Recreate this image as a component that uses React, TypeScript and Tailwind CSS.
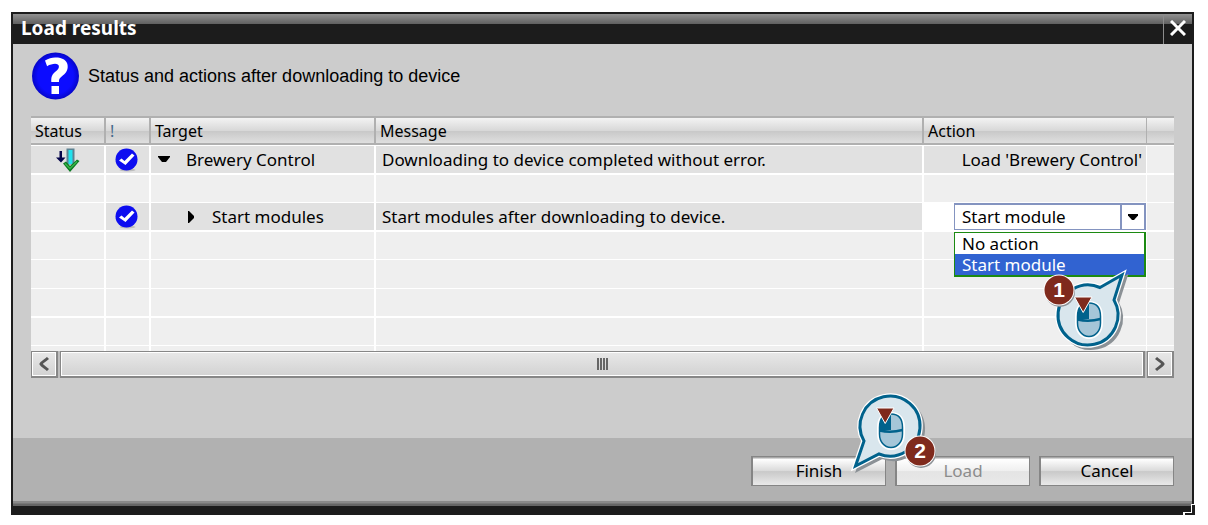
import { useState } from "react";
import type { ReactNode } from "react";

const cell = "border-white px-0 align-middle whitespace-nowrap";
const head =
  "h-[29px] border-y-2 border-[#b0b0b0] bg-[linear-gradient(#f3f3f3,#d8d8d8_50%,#c8c8c8_52%,#dfdfdf)] p-0 pl-1 text-left text-[16px] font-normal";

type Row = {
  height: string;
  line: string;
};

const emptyRows: Row[] = [
  { height: "h-[28px]", line: "border-b" },
  { height: "h-[29px]", line: "border-b" },
  { height: "h-[29px]", line: "border-b-2" },
  { height: "h-[28px]", line: "border-b" },
  { height: "h-[5px]", line: "border-b-0" },
];

function CheckIcon() {
  return (
    <svg width="26" height="24" viewBox="0 0 26 24" className="mx-auto block" aria-label="OK">
      <ellipse cx="12.500" cy="22" rx="8" ry="1.500" fill="#bdbdbd" />
      <circle cx="11.500" cy="11.500" r="11" fill="#0d0df0" />
      <path d="M4 12.500 6.500 10.500 9.500 13 17 5.500 19.500 7.500 10.500 17Z" fill="#fff" />
    </svg>
  );
}

function DownloadIcon() {
  return (
    <svg width="24" height="24" viewBox="0 0 24 24" className="mx-auto block" aria-label="Downloaded">
      <path d="M3.500 3h2.500v6.500h3.500L5 14.500 0 9.500h3.500Z" fill="#05054a" />
      <rect x="10.500" y="0.500" width="8" height="16" fill="#5c8292" />
      <rect x="12.500" y="2" width="4" height="14" fill="#20e2ee" />
      <path d="M7 15.500 10 13.500l4 4.500 7-6.500 2.500 1.500L14 24Z" fill="#0b7a22" />
      <path d="m9 15.500 5 5 7-7" fill="none" stroke="#37b54a" strokeWidth="1.500" />
    </svg>
  );
}

function QuestionIcon() {
  return (
    <svg width="49" height="48" viewBox="0 0 49 48" className="block shrink-0" aria-hidden="true">
      <defs>
        <radialGradient id="ball">
          <stop offset="0.75" stopColor="#0c0cff" />
          <stop offset="1" stopColor="#0606c8" />
        </radialGradient>
      </defs>
      <circle cx="24.500" cy="24" r="23.500" fill="url(#ball)" />
      <path
        d="M14 8.500C18.500 5.500 23 5 27 5.600c6.500.9 10 4.400 9.700 9.400-.2 4.500-2.800 6.800-5.700 9.200-2.700 2.200-3 3-3 5.800h-7.700c-.2-5.500.8-7.500 4-10.300 2.300-2 3.600-3 3.600-5 0-4-6.400-3.500-11.800-.5Z"
        fill="#fff"
      />
      <rect x="20.500" y="34" width="7.500" height="8" fill="#fff" />
    </svg>
  );
}

function Mouse() {
  return (
    <g>
      <path d="M0-17.500c8 0 12.500 5 12.500 14V3c0 8-5 14.500-12.500 14.500S-12.500 11-12.500 3v-6.500c0-9 4.500-14 12.500-14Z" fill="#a5c6d8" stroke="#fff" strokeWidth="3" />
      <path d="M0-17c7.500 0 11.500 5 11.500 13.500V3C11.500 10.500 7 16.500 0 16.500S-11.500 10.500-11.500 3v-6.500C-11.500-12-7.500-17 0-17Z" fill="#a5c6d8" stroke="#00628c" strokeWidth="1.500" />
      <path d="M0-17V-1h-11.500v-3C-11.500-12-7-17 0-17Z" fill="#00628c" />
      <path d="M-11.500-.5Q0 2 11.500-1" fill="none" stroke="#00628c" strokeWidth="2.500" />
      <path d="M-14.500-23H3L-5.800-7.500Z" fill="#7f2a1d" stroke="#fff" strokeWidth="1" />
    </g>
  );
}

function Callout({ shape, badgeX, badgeY, digit, className }: {
  shape: string;
  badgeX: number;
  badgeY: number;
  digit: string;
  className: string;
}) {
  return (
    <svg width="100" height="100" viewBox="-50 -50 100 100" className={className} aria-label={"Step " + digit}>
      <path d={shape} transform="translate(3 3)" fill="#8b9196" stroke="#8b9196" strokeWidth="4" />
      <path d={shape} fill="#fff" stroke="#fff" strokeWidth="5.500" />
      <path d={shape} fill="#d9e6ed" stroke="#00628c" strokeWidth="3" />
      <g transform="translate(1 5)">
        <Mouse />
      </g>
      <circle cx={badgeX + 1} cy={badgeY + 2} r="15" fill="#8b9196" />
      <circle cx={badgeX} cy={badgeY} r="15.500" fill="#fff" />
      <circle cx={badgeX} cy={badgeY} r="14.500" fill="#7f2a1d" />
      <text x={badgeX} y={badgeY + 7} textAnchor="middle" fontSize="21" fontWeight="700" fill="#fff" fontFamily="Liberation Sans, sans-serif">
        {digit}
      </text>
    </svg>
  );
}

function FooterButton({ children, disabled }: { children: ReactNode; disabled?: boolean }) {
  return (
    <button
      type="button"
      disabled={disabled}
      className="flex h-[30px] w-[135px] items-center justify-center border-t border-r border-b border-l-2 border-[#858585] bg-[linear-gradient(#a8a8a8_1px,#ffffff_2px,#d9d9d9_50%,#c9c9c9_52%,#e9e9e9)] pb-px text-black disabled:bg-[linear-gradient(#a8a8a8_1px,#ffffff_2px,#efefef_50%,#e4e4e4_52%,#e9e9e9)] disabled:text-[#8c8c8c]"
    >
      {children}
    </button>
  );
}

function ScrollButton({ label, d }: { label: string; d: string }) {
  return (
    <button
      type="button"
      aria-label={label}
      className="flex h-[27px] w-[27px] items-center justify-center border-t border-r-2 border-b-2 border-l border-[#878787] bg-linear-to-b from-[#e8e8e8] to-[#d2d2d2] inset-ring inset-ring-white"
    >
      <svg width="10" height="14" viewBox="0 0 10 14" aria-hidden="true">
        <path d={d} fill="none" stroke="#555" strokeWidth="3" />
      </svg>
    </button>
  );
}

export default function App() {
  const [action, setAction] = useState("Start module");

  return (
    <main className="bg-white pt-3 pr-[14px] pl-[11px] font-['Noto_Sans',sans-serif] text-[17px] leading-5 text-black">
      <section className="relative border-2 border-b-[9px] border-[#1c1c1c] bg-[#cccccc]" aria-labelledby="title">
        <header className="flex h-[30px] bg-[linear-gradient(#919191,#606060_10px,#1c1c1c_10px)] text-white">
          <h1 id="title" className="flex-1 pl-2 text-[19px] leading-7 font-bold">
            Load results
          </h1>
          <button type="button" aria-label="Close" className="flex w-[29px] items-center justify-center border-l border-[#8c8c8c] pb-0.5">
            <svg width="16" height="16" viewBox="0 0 16 16" aria-hidden="true">
              <path d="m1 1 14 14M15 1 1 15" stroke="#fff" strokeWidth="3" />
            </svg>
          </button>
        </header>

        <div className="px-[18px] pt-2 pb-[60px]">
          <div className="flex h-16 items-start gap-2">
            <QuestionIcon />
            <p className="pt-3.5 font-['Liberation_Sans',sans-serif] text-[18px]">
              Status and actions after downloading to device
            </p>
          </div>

          <table className="w-full table-fixed border-separate border-spacing-0 bg-[#efefef]">
            <colgroup>
              <col className="w-[73px]" />
              <col className="w-[45px]" />
              <col className="w-[225px]" />
              <col />
              <col className="w-[224px]" />
              <col className="w-[28px]" />
            </colgroup>
            <thead>
              <tr>
                <th scope="col" className={head}>Status</th>
                <th scope="col" className={head + " border-l-2 text-[#44698c]"}>!</th>
                <th scope="col" className={head + " border-l-2"}>Target</th>
                <th scope="col" className={head + " border-l-2"}>Message</th>
                <th scope="col" className={head + " border-l-2"}>Action</th>
                <th className={head + " border-l"} aria-label="Details" />
              </tr>
            </thead>
            <tbody>
              <tr>
                <td className={cell + " h-[30px] border-t border-b-2 bg-[#e1e1e1]"}><DownloadIcon /></td>
                <td className={cell + " border-t border-b-2 border-l-2 bg-[#e1e1e1]"}><CheckIcon /></td>
                <td className={cell + " border-t border-b-2 border-l-2 bg-[#e1e1e1]"}>
                  <div className="flex items-center gap-4 pl-[7px]">
                    <button type="button" aria-label="Collapse Brewery Control" className="w-3">
                      <svg width="12" height="8" viewBox="0 0 12 8" className="block"><path d="M0 0h12v1L8 6H4L0 1Z" /></svg>
                    </button>
                    Brewery Control
                  </div>
                </td>
                <td className={cell + " border-t border-b-2 border-l-2 bg-[#e1e1e1]"}>
                  <div className="pl-1.5">Downloading to device completed without error.</div>
                </td>
                <td className={cell + " border-t border-b-2 border-l-2 bg-[#e1e1e1]"}>
                  <div className="pr-1 text-right">Load 'Brewery Control'</div>
                </td>
                <td className={cell + " border-t border-b-2 border-l"} />
              </tr>
              <tr>
                <td className={cell + " h-[28px] border-b"} />
                <td className={cell + " border-b border-l-2"} />
                <td className={cell + " border-b border-l-2"} />
                <td className={cell + " border-b border-l-2"} />
                <td className={cell + " border-b border-l-2"} />
                <td className={cell + " border-b border-l"} />
              </tr>
              <tr>
                <td className={cell + " h-[29px] border-b-2"} />
                <td className={cell + " border-b-2 border-l-2 bg-[#e1e1e1]"}><CheckIcon /></td>
                <td className={cell + " border-b-2 border-l-2 bg-[#e1e1e1]"}>
                  <div className="flex items-center gap-4 pl-[37px]">
                    <button type="button" aria-label="Expand Start modules" className="w-2">
                      <svg width="7" height="12" viewBox="0 0 7 12" className="block"><path d="M0 0h1l5 5v2l-5 5H0Z" /></svg>
                    </button>
                    Start modules
                  </div>
                </td>
                <td className={cell + " border-b-2 border-l-2 bg-[#e1e1e1]"}>
                  <div className="pl-1.5">Start modules after downloading to device.</div>
                </td>
                <td className={cell + " border-b-2 border-l-2 bg-white p-0"}>
                  <div className="relative ml-[30px] h-[27px]">
                    <select
                      aria-label="Action for start modules"
                      value={action}
                      onChange={(e) => setAction(e.target.value)}
                      className="block h-full w-full appearance-none border border-t-2 border-r-2 border-[#8494c0] bg-white pl-[7px]"
                    >
                      <option>No action</option>
                      <option>Start module</option>
                    </select>
                    <div className="pointer-events-none absolute top-0.5 right-0.5 bottom-px flex w-6 items-center justify-center border-l-2 border-[#8494c0]">
                      <svg width="10" height="6" viewBox="0 0 10 6"><path d="M0 0h10v1.500L6 6H4L0 1.500Z" /></svg>
                    </div>
                    <div role="listbox" aria-label="Actions" className="absolute top-[29px] right-0 left-0 z-10 border border-r-2 border-b-2 border-[#1c8a12] bg-white">
                      {["No action", "Start module"].map((name) => (
                        <button
                          key={name}
                          type="button"
                          role="option"
                          aria-selected={name === action}
                          onClick={() => setAction(name)}
                          className="block h-[21px] w-full pl-[7px] text-left aria-selected:bg-[#3163d1] aria-selected:text-white"
                        >
                          {name}
                        </button>
                      ))}
                    </div>
                    <Callout
                      shape="M12-27.500 34-40 26-15A30 30 0 1 1 12-27.500Z"
                      badgeX={-29}
                      badgeY={-25}
                      digit="1"
                      className="pointer-events-none absolute top-[62px] right-[8px] z-20"
                    />
                  </div>
                </td>
                <td className={cell + " border-b-2 border-l"} />
              </tr>
              {emptyRows.map((row, i) => (
                <tr key={i}>
                  <td className={cell + " p-0 " + row.height + " " + row.line} />
                  <td className={cell + " border-l-2 p-0 " + row.line} />
                  <td className={cell + " border-l-2 p-0 " + row.line} />
                  <td className={cell + " border-l-2 p-0 " + row.line} />
                  <td className={cell + " border-l-2 p-0 " + row.line} />
                  <td className={cell + " border-l p-0 " + row.line} />
                </tr>
              ))}
            </tbody>
          </table>

          <div className="flex gap-0.5 bg-[#bdbdbd]">
            <ScrollButton label="Scroll left" d="M9 1C7 3 3 5 2 7c1 2 5 4 7 6" />
            <div className="flex h-[27px] flex-1 items-center justify-center gap-px border-t border-r-2 border-b-2 border-l border-[#878787] bg-linear-to-b from-[#e8e8e8] to-[#d2d2d2] inset-ring inset-ring-white">
              {[0, 1, 2, 3].map((n) => (
                <span key={n} className="h-3 w-0.5 bg-[#666]" />
              ))}
            </div>
            <ScrollButton label="Scroll right" d="M1 1c2 2 6 4 7 6-1 2-5 4-7 6" />
          </div>
        </div>

        <footer className="flex h-[68px] justify-end gap-[9px] bg-[linear-gradient(#b1b1b1_63px,#8a8a8a_63px,#8a8a8a_65px,#666666_66px)] pt-[18px] pr-[18px]">
          <div className="relative">
            <FooterButton>Finish</FooterButton>
            <Callout
              shape="M-26 15-34.500 40-11 28A30 30 0 1 0-26 15Z"
              badgeX={30}
              badgeY={25}
              digit="2"
              className="pointer-events-none absolute -top-[80px] -right-[54px] z-20"
            />
          </div>
          <FooterButton disabled>Load</FooterButton>
          <FooterButton>Cancel</FooterButton>
        </footer>
        <svg width="12" height="11" viewBox="0 0 12 11" className="absolute -right-[3px] -bottom-[9px]" aria-hidden="true">
          <path d="M9 1h3v10H2V9h7Z" fill="#1c1c1c" />
          <path d="M8 0h1v9H0V8h8ZM0 9h2v2H0ZM9 0h3v1H9Z" fill="#fff" />
        </svg>
      </section>
    </main>
  );
}
